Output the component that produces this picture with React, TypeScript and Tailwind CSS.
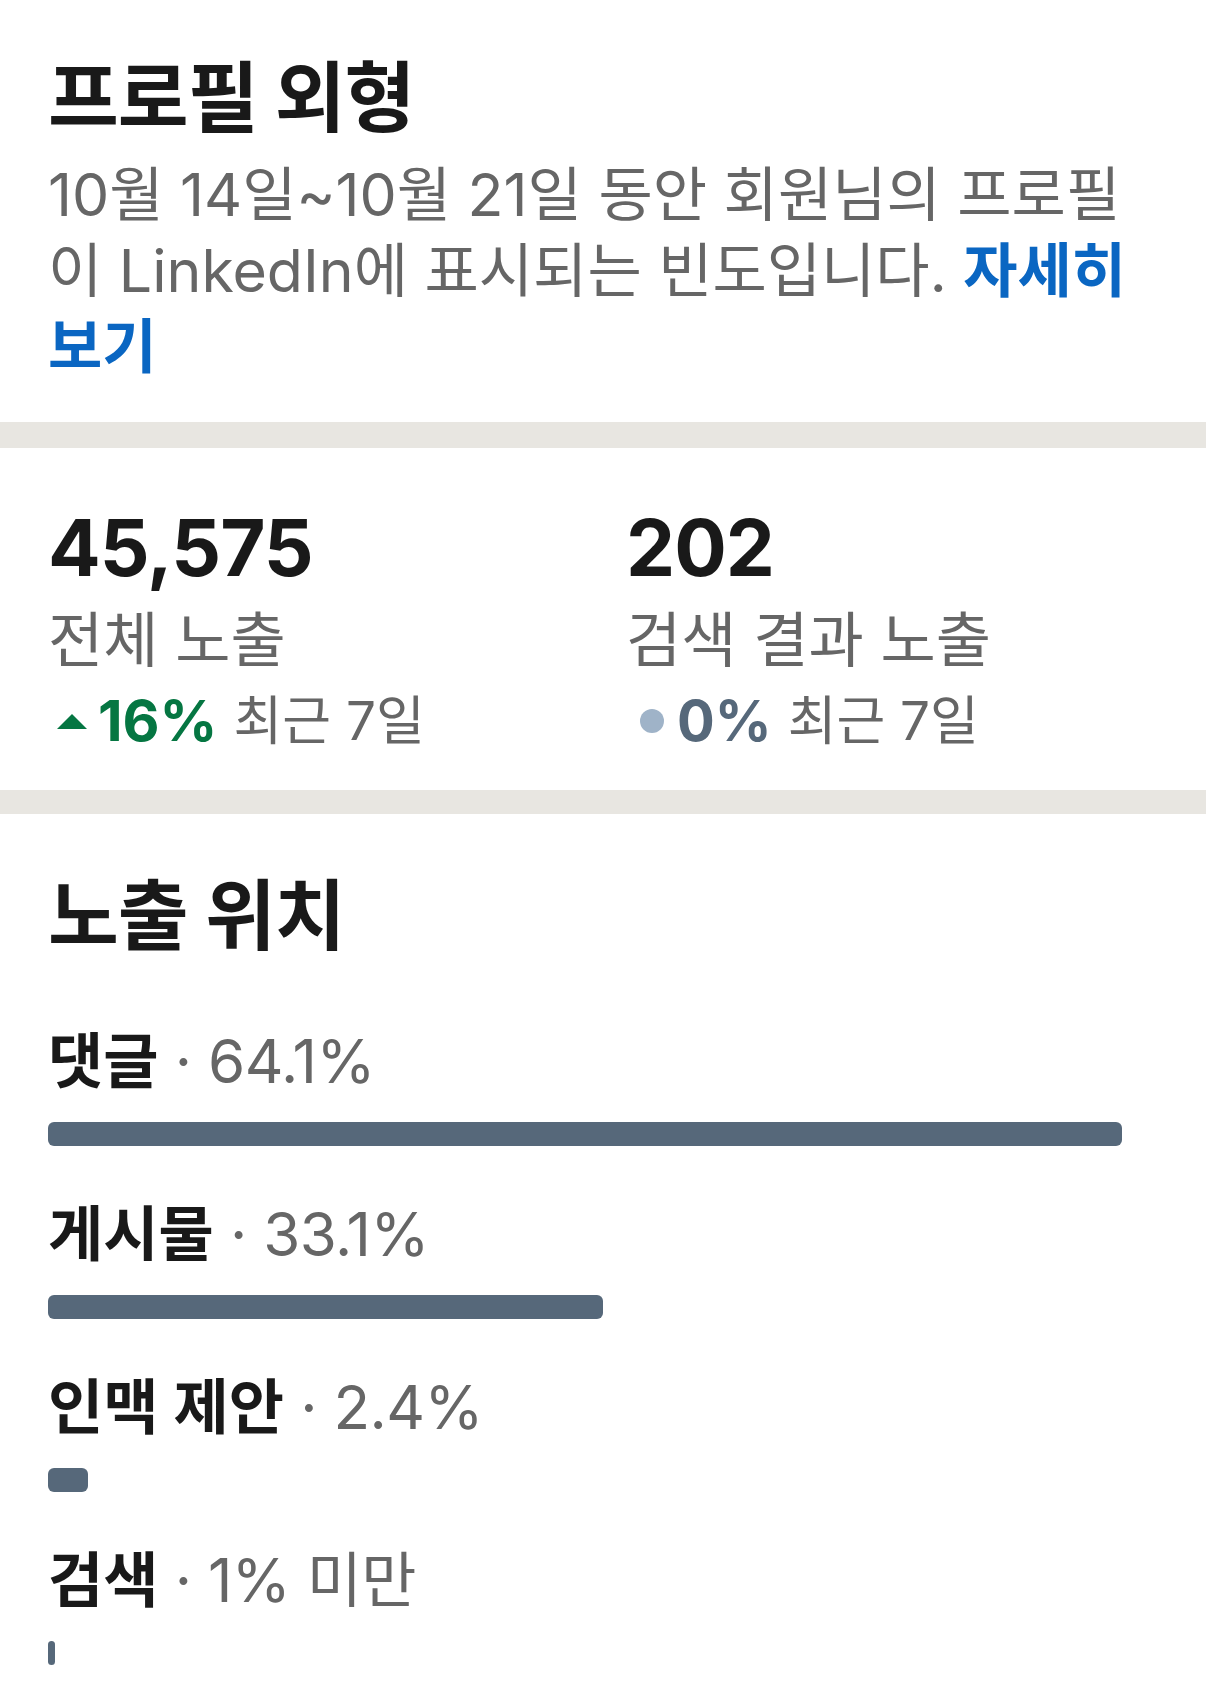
import React from 'react';

const placements = [
  { label: '댓글', value: '64.1%', pct: 64.1 },
  { label: '게시물', value: '33.1%', pct: 33.1 },
  { label: '인맥 제안', value: '2.4%', pct: 2.4 },
  { label: '검색', value: '1% 미만', pct: 0.4 },
];

const MAX_BAR = 1074;

export default function App() {
  const top = Math.max(...placements.map((p) => p.pct));

  return (
    <div className="min-h-[1698px] w-full bg-white font-['Inter','Noto_Sans_CJK_KR',sans-serif] text-[#191919]">
      {/* Header */}
      <section className="px-12 pt-[52px] pb-[37px]">
        <h1 className="text-[77px] font-bold leading-[92px] tracking-[-1px]">프로필 외형</h1>
        <p className="mt-[13px] text-[59px] leading-[76px] text-[#666666]">
          10월 14일~10월 21일 동안 회원님의 프로필이 LinkedIn에 표시되는 빈도입니다.{' '}
          <span className="font-semibold text-[#0a66c2]">자세히 보기</span>
        </p>
      </section>

      <div className="h-[26px] bg-[#e8e6e1]" />

      {/* Stats */}
      <section className="grid grid-cols-[578px_1fr] px-12 pt-[53px] pb-[31px]">
        <div>
          <p className="text-[78px] font-bold leading-[94px] tracking-[-1px]">45,575</p>
          <p className="mt-[7px] text-[60px] leading-[76px] text-[#666666]">전체 노출</p>
          <div className="mt-[5px] flex items-center text-[53px] leading-[76px]">
            <svg width="30" height="15" viewBox="0 0 30 15" className="ml-[9px] mr-[11px]">
              <path d="M15 0 L30 15 L0 15 Z" fill="#057642" />
            </svg>
            <span className="text-[57px] font-bold text-[#057642]">16%</span>
            <span className="ml-4 text-[#666666]">최근 7일</span>
          </div>
        </div>
        <div>
          <p className="text-[78px] font-bold leading-[94px] tracking-[-1px]">202</p>
          <p className="mt-[7px] text-[60px] leading-[76px] text-[#666666]">검색 결과 노출</p>
          <div className="mt-[5px] flex items-center text-[53px] leading-[76px]">
            <span className="ml-[14px] mr-[13px] h-6 w-6 rounded-full bg-[#9fb3c8]" />
            <span className="text-[56px] font-bold text-[#56687a]">0%</span>
            <span className="ml-4 text-[#666666]">최근 7일</span>
          </div>
        </div>
      </section>

      <div className="h-6 bg-[#e8e6e1]" />

      {/* Placements */}
      <section className="px-12 pt-14 pb-10">
        <h2 className="text-[77px] font-bold leading-[92px] tracking-[-1px]">노출 위치</h2>
        <div className="mt-[61px] flex flex-col gap-[50px]">
          {placements.map((p) => (
            <div key={p.label}>
              <p className="text-[60px] leading-[76px]">
                <span className="font-semibold text-[#191919]">{p.label}</span>
                <span className="text-[#666666] tracking-[-0.5px]"> · {p.value}</span>
              </p>
              <div
                className="mt-[23px] h-6 rounded-md bg-[#56687a]"
                style={{ width: Math.max(7, Math.round((p.pct / top) * MAX_BAR)) }}
              />
            </div>
          ))}
        </div>
      </section>
    </div>
  );
}
